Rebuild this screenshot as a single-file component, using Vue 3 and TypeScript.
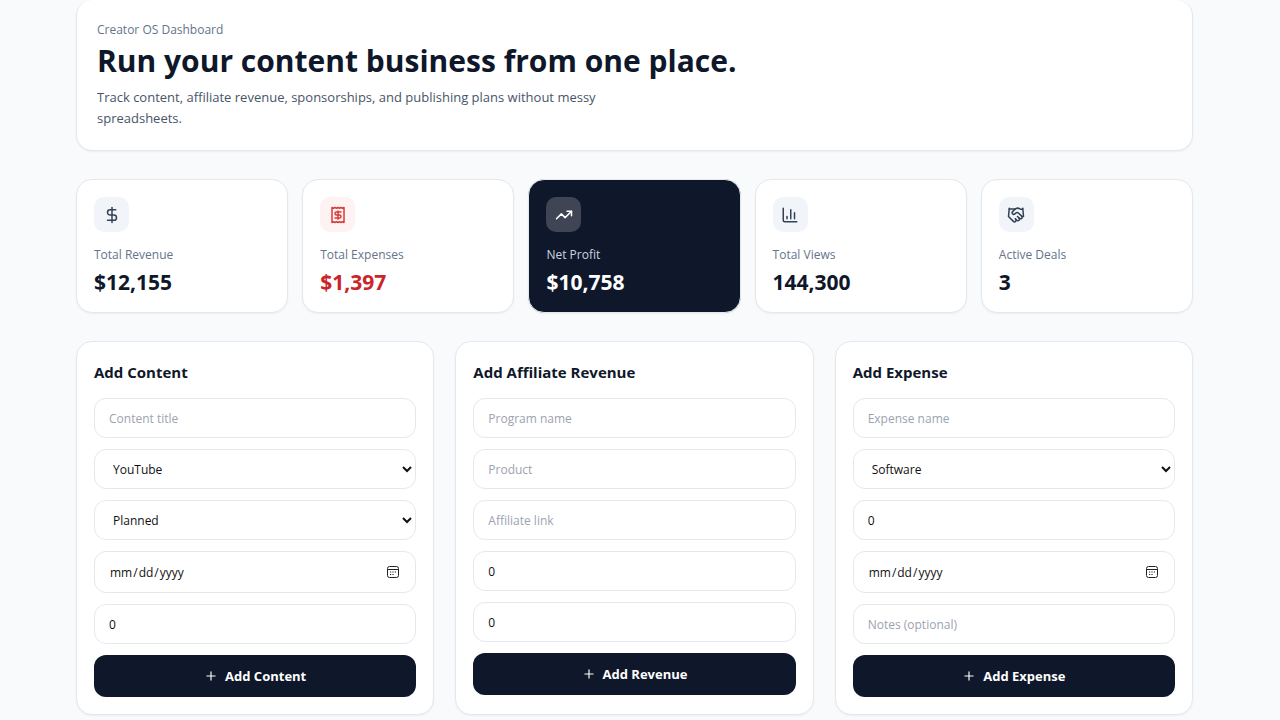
<script setup lang="ts">
import { reactive } from 'vue'

type IconName = 'dollar' | 'receipt' | 'trend' | 'chart' | 'handshake' | 'plus'

interface Stat {
  label: string
  value: string
  icon: IconName
  tone?: 'danger' | 'dark'
}

interface Field {
  name: string
  kind: 'text' | 'number' | 'date' | 'select'
  label: string
  value: string | number
  options?: string[]
}

interface EntryForm {
  title: string
  action: string
  fields: Field[]
}

const icons: Record<IconName, string[]> = {
  dollar: ['M12 2v20', 'M17 5H9.5a3.5 3.5 0 0 0 0 7h5a3.5 3.5 0 0 1 0 7H6'],
  receipt: [
    'M4 2v20l2-1 2 1 2-1 2 1 2-1 2 1 2-1 2 1V2l-2 1-2-1-2 1-2-1-2 1-2-1-2 1Z',
    'M16 8h-6a2 2 0 1 0 0 4h4a2 2 0 1 1 0 4H8',
    'M12 17.5v-11',
  ],
  trend: ['M22 7 13.5 15.5 8.5 10.5 2 17', 'M16 7h6v6'],
  chart: ['M3 3v16a2 2 0 0 0 2 2h16', 'M18 17V9', 'M13 17V5', 'M8 17v-3'],
  handshake: [
    'm11 17 2 2a1 1 0 1 0 3-3',
    'm14 14 2.5 2.5a1 1 0 1 0 3-3l-3.88-3.88a3 3 0 0 0-4.24 0l-.88.88a1 1 0 1 1-3-3l2.81-2.81a5.79 5.79 0 0 1 7.06-.87l.47.28a2 2 0 0 0 1.42.25L21 4',
    'm21 3 1 11h-2',
    'M3 3 2 14l6.5 6.5a1 1 0 1 0 3-3',
    'M3 4h8',
  ],
  plus: ['M5 12h14', 'M12 5v14'],
}

const stats: Stat[] = [
  { label: 'Total Revenue', value: '$12,155', icon: 'dollar' },
  { label: 'Total Expenses', value: '$1,397', icon: 'receipt', tone: 'danger' },
  { label: 'Net Profit', value: '$10,758', icon: 'trend', tone: 'dark' },
  { label: 'Total Views', value: '144,300', icon: 'chart' },
  { label: 'Active Deals', value: '3', icon: 'handshake' },
]

const forms = reactive<EntryForm[]>([
  {
    title: 'Add Content',
    action: 'Add Content',
    fields: [
      { name: 'title', kind: 'text', label: 'Content title', value: '' },
      { name: 'platform', kind: 'select', label: 'Platform', value: 'YouTube', options: ['YouTube', 'Instagram', 'TikTok', 'Blog'] },
      { name: 'status', kind: 'select', label: 'Status', value: 'Planned', options: ['Planned', 'Drafting', 'Published'] },
      { name: 'date', kind: 'date', label: 'Publish date', value: '' },
      { name: 'views', kind: 'number', label: 'Views', value: 0 },
    ],
  },
  {
    title: 'Add Affiliate Revenue',
    action: 'Add Revenue',
    fields: [
      { name: 'program', kind: 'text', label: 'Program name', value: '' },
      { name: 'product', kind: 'text', label: 'Product', value: '' },
      { name: 'link', kind: 'text', label: 'Affiliate link', value: '' },
      { name: 'clicks', kind: 'number', label: 'Clicks', value: 0 },
      { name: 'revenue', kind: 'number', label: 'Revenue', value: 0 },
    ],
  },
  {
    title: 'Add Expense',
    action: 'Add Expense',
    fields: [
      { name: 'name', kind: 'text', label: 'Expense name', value: '' },
      { name: 'category', kind: 'select', label: 'Category', value: 'Software', options: ['Software', 'Equipment', 'Travel'] },
      { name: 'amount', kind: 'number', label: 'Amount', value: 0 },
      { name: 'date', kind: 'date', label: 'Expense date', value: '' },
      { name: 'notes', kind: 'text', label: 'Notes (optional)', value: '' },
    ],
  },
])
</script>

<template>
  <main class="page">
    <header class="card hero">
      <p class="eyebrow">Creator OS Dashboard</p>
      <h1>Run your content business from one place.</h1>
      <p class="lead">Track content, affiliate revenue, sponsorships, and publishing plans without messy spreadsheets.</p>
    </header>

    <section class="stats" aria-label="Summary">
      <article v-for="stat in stats" :key="stat.label" class="card stat" :class="stat.tone">
        <div class="badge">
          <svg class="icon" viewBox="0 0 24 24" aria-hidden="true">
            <path v-for="d in icons[stat.icon]" :key="d" :d="d" />
          </svg>
        </div>
        <p class="stat-label">{{ stat.label }}</p>
        <p class="stat-value">{{ stat.value }}</p>
      </article>
    </section>

    <section class="forms" aria-label="New entries">
      <form v-for="form in forms" :key="form.title" class="card entry" @submit.prevent>
        <h2>{{ form.title }}</h2>
        <div class="fields">
          <template v-for="field in form.fields" :key="field.name">
            <select v-if="field.kind === 'select'" v-model="field.value" class="control" :aria-label="field.label">
              <option v-for="option in field.options" :key="option">{{ option }}</option>
            </select>
            <input
              v-else
              v-model="field.value"
              class="control"
              :class="field.kind"
              :type="field.kind"
              :placeholder="field.label"
              :aria-label="field.label"
            />
          </template>
          <button type="submit" class="submit">
            <svg class="plus" viewBox="0 0 24 24" aria-hidden="true">
              <path v-for="d in icons.plus" :key="d" :d="d" />
            </svg>
            {{ form.action }}
          </button>
        </div>
      </form>
    </section>
  </main>
</template>

<style>
body {
  margin: 0;
  background: #f8fafc;
}
</style>

<style scoped>
.page {
  box-sizing: border-box;
  min-height: 100vh;
  padding: 0 87px 0 76px;
  display: flex;
  flex-direction: column;
  gap: 28px;
  background: #f8fafc;
  color: #0f172a;
  font-family: "Open Sans", "Noto Sans", sans-serif;
}

h1,
h2,
p {
  margin: 0;
}

.card {
  box-sizing: border-box;
  min-width: 0;
  border: 1px solid #e4e8ed;
  border-radius: 16px;
  background: #fff;
  box-shadow: 0 1px 2px rgba(0, 0, 0, 0.05);
}

.hero {
  padding: 21px 20px;
  border-top: 0;
}

.eyebrow {
  font-size: 12px;
  line-height: 18px;
  font-weight: 500;
  color: #64748b;
}

h1 {
  margin-top: 2px;
  font-size: 30px;
  line-height: 40px;
  font-weight: 700;
}

.lead {
  margin-top: 6px;
  max-width: 560px;
  font-size: 13px;
  line-height: 21px;
  color: #475569;
}

.stats {
  display: grid;
  grid-template-columns: repeat(5, minmax(0, 1fr));
  gap: 14px;
}

.stat {
  padding: 17px 17px 16px;
}

.badge {
  width: 35px;
  height: 35px;
  display: flex;
  align-items: center;
  justify-content: center;
  border-radius: 10px;
  background: #f1f5f9;
  color: #334155;
}

.icon,
.plus {
  width: 18px;
  height: 18px;
  fill: none;
  stroke: currentColor;
  stroke-width: 2;
  stroke-linecap: round;
  stroke-linejoin: round;
}

.plus {
  width: 14px;
  height: 14px;
}

.stat-label {
  margin-top: 14px;
  font-size: 12px;
  line-height: 18px;
  color: #64748b;
}

.stat-value {
  margin-top: 4px;
  font-size: 21px;
  line-height: 28px;
  font-weight: 700;
}

.danger .badge {
  background: #fef2f2;
  color: #d93a3a;
}

.danger .stat-value {
  color: #c8262b;
}

.dark {
  background: #0f172a;
  color: #fff;
}

.dark .badge {
  background: rgba(255, 255, 255, 0.2);
  color: #fff;
}

.dark .stat-label {
  color: #cbd5e1;
}

.forms {
  display: grid;
  grid-template-columns: repeat(3, minmax(0, 1fr));
  gap: 21px;
}

.entry {
  padding: 18px 17px 17px;
}

h2 {
  font-size: 15px;
  line-height: 24px;
  font-weight: 700;
}

.fields {
  margin-top: 14px;
  display: flex;
  flex-direction: column;
  gap: 11px;
}

.control {
  box-sizing: border-box;
  width: 100%;
  height: 40px;
  margin: 0;
  padding: 0 14px;
  border: 1px solid #e4e8ed;
  border-radius: 12px;
  background-color: #fff;
  color: #111;
  font-family: inherit;
  font-size: 12px;
}

.control::placeholder {
  color: #9ca3af;
}

.date {
  height: 42px;
}

.date::-webkit-calendar-picker-indicator {
  width: 12px;
  height: 12px;
  padding: 2px;
  background: url("data:image/svg+xml,%3Csvg xmlns='http://www.w3.org/2000/svg' viewBox='0 0 12 12' fill='none' stroke='%23222'%3E%3Crect x='.5' y='.5' width='11' height='11' rx='2'/%3E%3Cpath d='M1 3.5h10'/%3E%3Cpath d='M3 6h1.2M5.4 6h1.2M7.8 6h1.2M3 8.5h1.2M5.4 8.5h1.2' stroke-width='1.2'/%3E%3C/svg%3E") center / 12px 12px no-repeat;
}

.submit {
  height: 42px;
  display: flex;
  align-items: center;
  justify-content: center;
  gap: 7px;
  border: 0;
  border-radius: 12px;
  background: #0f172a;
  color: #fff;
  font-family: inherit;
  font-size: 13px;
  font-weight: 700;
}
</style>
